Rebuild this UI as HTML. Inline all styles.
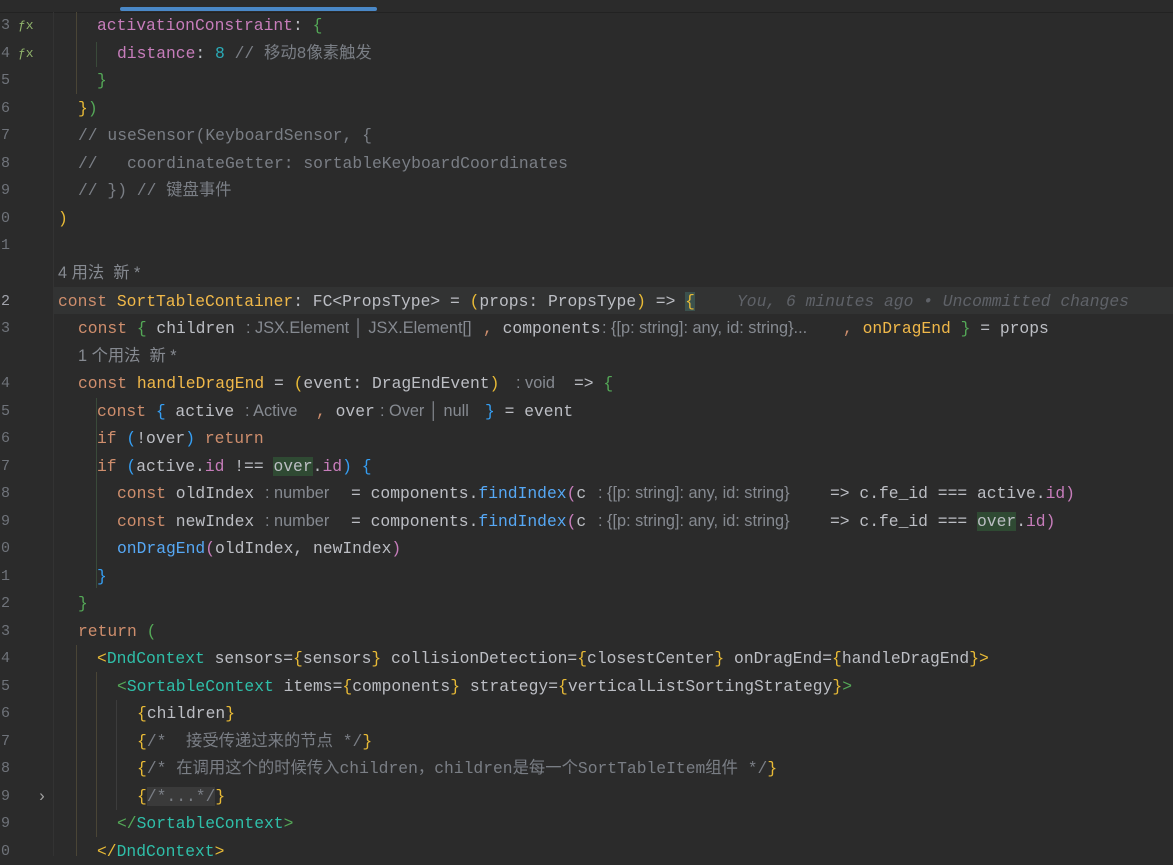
<!DOCTYPE html>
<html><head><meta charset="utf-8">
<style>
body{margin:0;width:1173px;height:856px;background:#2b2b2b;overflow:hidden;position:relative;font-family:"Liberation Mono","Noto Sans CJK SC",monospace;font-size:16.33px;color:#bcbec4}
.l{position:absolute;white-space:pre;height:27px;line-height:27px}
.n{position:absolute;left:-4px;width:14px;text-align:right;color:#6f737a;white-space:pre;line-height:27px;font-size:15px}
.h{font-family:"Liberation Sans","Noto Sans CJK SC",sans-serif;font-size:16.3px;color:#868a91}
.k{color:#cf8e6d}.p{color:#c77dbb}.num{color:#2aacb8}.c{color:#7a7e85}.f{color:#56a8f5}
.y{color:#e8ba36}.g{color:#54a857}.b{color:#359ff4}.t{color:#2fbfa9}.o{color:#f0b849}
.gi{position:absolute;width:1px;background:#4a4536}
</style></head><body>
<div style="position:absolute;left:0;top:0;width:1173px;height:12px;background:#2b2b2b;border-bottom:1px solid #222"></div>
<div style="position:absolute;left:120px;top:7px;width:257px;height:4px;border-radius:2px;background:#4a88c7"></div>
<div style="position:absolute;left:53px;top:12px;width:1px;height:844px;background:#333"></div>
<div style="position:absolute;left:54px;top:287px;width:1119px;height:27px;background:#323333"></div>
<div class="gi" style="left:76px;top:12px;height:82px"></div>
<div class="gi" style="left:96px;top:42px;height:25px;background:#3a4a3a"></div>
<div class="gi" style="left:76px;top:645px;height:211px"></div>
<div class="gi" style="left:96px;top:672px;height:165px"></div>
<div class="gi" style="left:116px;top:700px;height:110px;background:#3c3c3c"></div>
<div class="gi" style="left:96px;top:398px;height:190px;background:#3a4a3a"></div>

<div class="n" style="top:12px">3</div><div class="l" style="left:18px;top:12px;color:#8fb26b;font-size:13px">ƒx</div>
<div class="n" style="top:40px">4</div><div class="l" style="left:18px;top:40px;color:#8fb26b;font-size:13px">ƒx</div>
<div class="n" style="top:67px">5</div><div class="n" style="top:95px">6</div><div class="n" style="top:122px">7</div>
<div class="n" style="top:150px">8</div><div class="n" style="top:177px">9</div><div class="n" style="top:205px">0</div>
<div class="n" style="top:232px">1</div><div class="n" style="top:288px;color:#a1a3ab">2</div><div class="n" style="top:315px">3</div>
<div class="n" style="top:370px">4</div><div class="n" style="top:398px">5</div><div class="n" style="top:425px">6</div>
<div class="n" style="top:453px">7</div><div class="n" style="top:480px">8</div><div class="n" style="top:508px">9</div>
<div class="n" style="top:535px">0</div><div class="n" style="top:563px">1</div><div class="n" style="top:590px">2</div>
<div class="n" style="top:618px">3</div><div class="n" style="top:645px">4</div><div class="n" style="top:673px">5</div>
<div class="n" style="top:700px">6</div><div class="n" style="top:728px">7</div><div class="n" style="top:755px">8</div>
<div class="n" style="top:783px">9</div><div class="n" style="top:810px">9</div><div class="n" style="top:838px">0</div>
<div class="l" style="left:37px;top:783px;color:#a0a0a0">›</div>

<div class="l" style="left:97px;top:12px"><span class="p">activationConstraint</span>: <span class="g">{</span></div>
<div class="l" style="left:117px;top:40px"><span class="p">distance</span>: <span class="num">8</span> <span class="c">// 移动8像素触发</span></div>
<div class="l" style="left:97px;top:67px"><span class="g">}</span></div>
<div class="l" style="left:78px;top:95px"><span class="y">}</span><span class="g">)</span></div>
<div class="l" style="left:78px;top:122px"><span class="c">// useSensor(KeyboardSensor, {</span></div>
<div class="l" style="left:78px;top:150px"><span class="c">//   coordinateGetter: sortableKeyboardCoordinates</span></div>
<div class="l" style="left:78px;top:177px"><span class="c">// }) // 键盘事件</span></div>
<div class="l" style="left:58px;top:205px"><span class="y">)</span></div>
<div class="l h" style="left:58px;top:260px">4 用法  新 *</div>
<div class="l" style="left:58px;top:288px"><span class="k">const</span> <span class="o">SortTableContainer</span>: FC&lt;PropsType&gt; = <span class="y">(</span>props: PropsType<span class="y">)</span> =&gt; <span class="y" style="background:#3b514d">{</span></div>
<div class="l" style="left:737px;top:288px;color:#5f6268;font-style:italic">You, 6 minutes ago • Uncommitted changes</div>

<div class="l" style="left:78px;top:315px"><span class="k">const</span> <span class="g">{</span> children</div>
<div class="l h" style="left:246px;top:315px">: JSX.Element │ JSX.Element[]</div>
<div class="l" style="left:483px;top:315px"><span class="k">,</span> components</div>
<div class="l h" style="left:602px;top:315px">: {[p: string]: any, id: string}...</div>
<div class="l" style="left:843px;top:315px"><span class="k">,</span> <span class="o">onDragEnd</span> <span class="g">}</span> = props</div>
<div class="l h" style="left:78px;top:343px">1 个用法  新 *</div>
<div class="l" style="left:78px;top:370px"><span class="k">const</span> <span class="o">handleDragEnd</span> = <span class="y">(</span>event: DragEndEvent<span class="y">)</span></div>
<div class="l h" style="left:516px;top:370px">: void</div>
<div class="l" style="left:574px;top:370px">=&gt; <span class="g">{</span></div>
<div class="l" style="left:97px;top:398px"><span class="k">const</span> <span class="b">{</span> active</div>
<div class="l h" style="left:245px;top:398px">: Active</div>
<div class="l" style="left:316px;top:398px"><span class="k">,</span> over</div>
<div class="l h" style="left:380px;top:398px">: Over │ null</div>
<div class="l" style="left:485px;top:398px"><span class="b">}</span> = event</div>
<div class="l" style="left:97px;top:425px"><span class="k">if</span> <span class="b">(</span>!over<span class="b">)</span> <span class="k">return</span></div>
<div class="l" style="left:97px;top:453px"><span class="k">if</span> <span class="b">(</span>active.<span class="p">id</span> !== <span style="background:#2f4a33">over</span>.<span class="p">id</span><span class="b">)</span> <span class="b">{</span></div>
<div class="l" style="left:117px;top:480px"><span class="k">const</span> oldIndex</div>
<div class="l h" style="left:265px;top:480px">: number</div>
<div class="l" style="left:351px;top:480px">= components.<span class="f">findIndex</span><span class="p">(</span>c</div>
<div class="l h" style="left:598px;top:480px">: {[p: string]: any, id: string}</div>
<div class="l" style="left:830px;top:480px">=&gt; c.fe_id === active.<span class="p">id)</span></div>
<div class="l" style="left:117px;top:508px"><span class="k">const</span> newIndex</div>
<div class="l h" style="left:265px;top:508px">: number</div>
<div class="l" style="left:351px;top:508px">= components.<span class="f">findIndex</span><span class="p">(</span>c</div>
<div class="l h" style="left:598px;top:508px">: {[p: string]: any, id: string}</div>
<div class="l" style="left:830px;top:508px">=&gt; c.fe_id === <span style="background:#2f4a33">over</span>.<span class="p">id)</span></div>
<div class="l" style="left:117px;top:535px"><span class="f">onDragEnd</span><span class="p">(</span>oldIndex, newIndex<span class="p">)</span></div>
<div class="l" style="left:97px;top:563px"><span class="b">}</span></div>
<div class="l" style="left:78px;top:590px"><span class="g">}</span></div>
<div class="l" style="left:78px;top:618px"><span class="k">return</span> <span class="g">(</span></div>
<div class="l" style="left:97px;top:645px"><span class="y">&lt;</span><span class="t">DndContext</span> sensors=<span class="y">{</span>sensors<span class="y">}</span> collisionDetection=<span class="y">{</span>closestCenter<span class="y">}</span> onDragEnd=<span class="y">{</span>handleDragEnd<span class="y">}&gt;</span></div>
<div class="l" style="left:117px;top:673px"><span class="g">&lt;</span><span class="t">SortableContext</span> items=<span class="y">{</span>components<span class="y">}</span> strategy=<span class="y">{</span>verticalListSortingStrategy<span class="y">}</span><span class="g">&gt;</span></div>
<div class="l" style="left:137px;top:700px"><span class="y">{</span>children<span class="y">}</span></div>
<div class="l" style="left:137px;top:728px"><span class="y">{</span><span class="c">/*  接受传递过来的节点 */</span><span class="y">}</span></div>
<div class="l" style="left:137px;top:755px"><span class="y">{</span><span class="c">/* 在调用这个的时候传入children，children是每一个SortTableItem组件 */</span><span class="y">}</span></div>
<div class="l" style="left:137px;top:783px"><span class="y">{</span><span class="c" style="background:#3a3a3a">/*...*/</span><span class="y">}</span></div>
<div class="l" style="left:117px;top:810px"><span class="g">&lt;/</span><span class="t">SortableContext</span><span class="g">&gt;</span></div>
<div class="l" style="left:97px;top:838px"><span class="y">&lt;/</span><span class="t">DndContext</span><span class="y">&gt;</span></div>
</body></html>
